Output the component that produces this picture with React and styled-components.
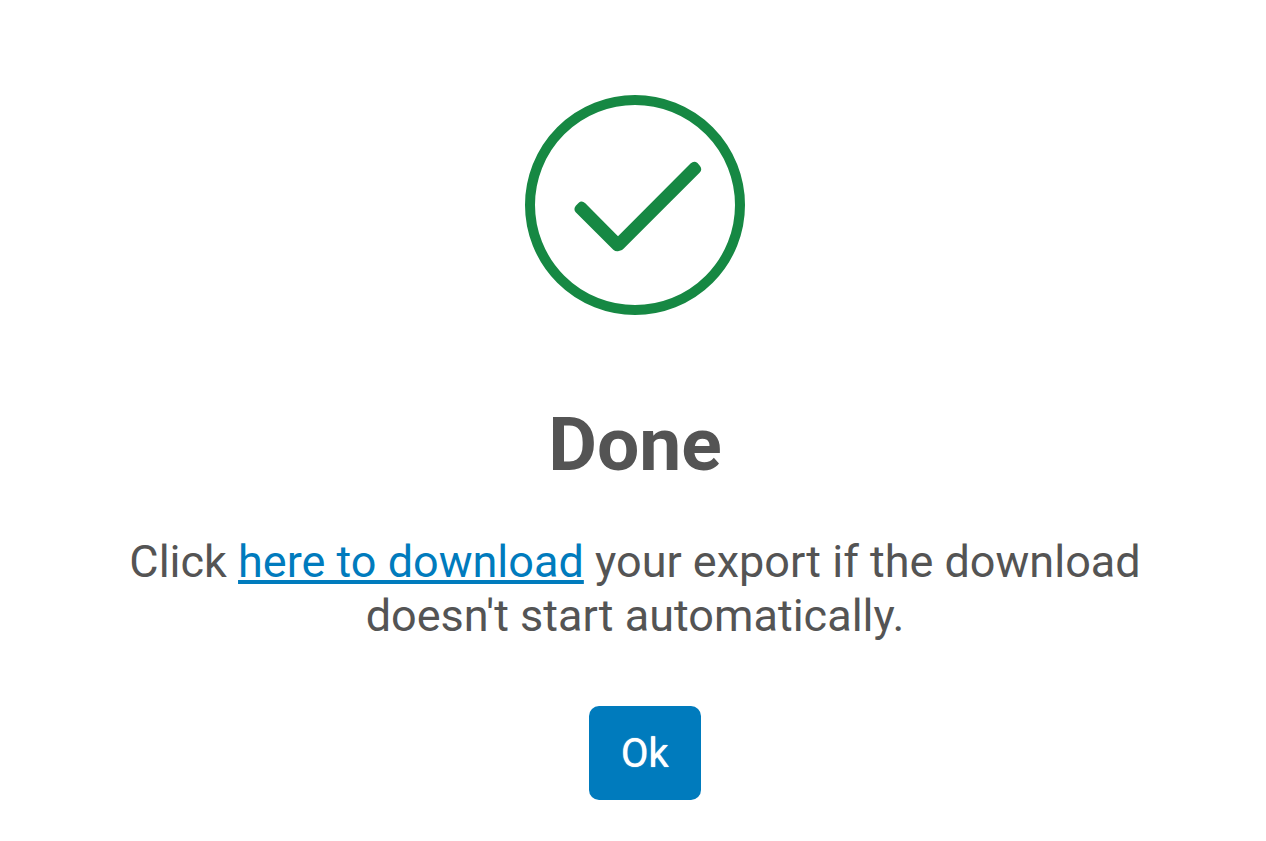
import styled, { createGlobalStyle } from 'styled-components'

const GlobalStyle = createGlobalStyle`
    body {
        background-color: #ffffff;
        color: #545454;
        font-family: Roboto, 'Liberation Sans', sans-serif;
        margin: 0;
    }
`

const DialogWrap = styled.main`
    align-items: center;
    box-sizing: border-box;
    display: flex;
    flex-direction: column;
    padding: 95px 100px 40px 104px;
    text-align: center;
    width: 100%;
`

const SuccessIcon = styled.svg`
    display: block;
    height: 220px;
    width: 220px;
`

const Title = styled.h1`
    font-size: 75px;
    font-weight: 700;
    line-height: 88px;
    margin: 85px 0 0;
`

const Message = styled.p`
    font-size: 45px;
    line-height: 54px;
    margin: 47px 0 0;
    max-width: 1040px;
`

const DownloadLink = styled.a`
    color: #007bbd;
    text-decoration: underline;
    text-decoration-thickness: 4px;
    text-underline-offset: 3px;
`

const Actions = styled.div`
    display: flex;
    justify-content: center;
    margin-top: 63px;
    padding-left: 20px;
`

const Button = styled.button`
    background-color: #007bbd;
    border: 0;
    border-radius: 10px;
    color: #ffffff;
    cursor: pointer;
    font-family: inherit;
    font-size: 40px;
    font-weight: 400;
    line-height: 46px;
    padding: 25px 32px 23px;
    text-shadow: 0 0 1px #ffffff;
`

function CheckIcon() {
    return (
        <SuccessIcon viewBox="0 0 220 220" fill="none" aria-hidden="true">
            <circle cx="110" cy="110" r="105" stroke="#168843" strokeWidth="10" />
            <path
                d="M50.700 117.300Q48 114 51 110.500L53.500 108Q56.700 105 60.300 108.300L93 141.200L165.500 68.500Q169 65.500 172.500 68L175 71Q177.600 74.300 174.800 77.500L98.500 153.700Q97 155.200 95.500 155.500L93 156.300Q90.500 156.700 88.300 154.700Z"
                fill="#168843"
            />
        </SuccessIcon>
    )
}

export default function App() {
    return (
        <>
            <GlobalStyle />
            <DialogWrap>
                <CheckIcon />
                <Title>Done</Title>
                <Message>
                    Click <DownloadLink href="#download">here to download</DownloadLink> your
                    export if the download doesn't start automatically.
                </Message>
                <Actions>
                    <Button type="button">Ok</Button>
                </Actions>
            </DialogWrap>
        </>
    )
}
